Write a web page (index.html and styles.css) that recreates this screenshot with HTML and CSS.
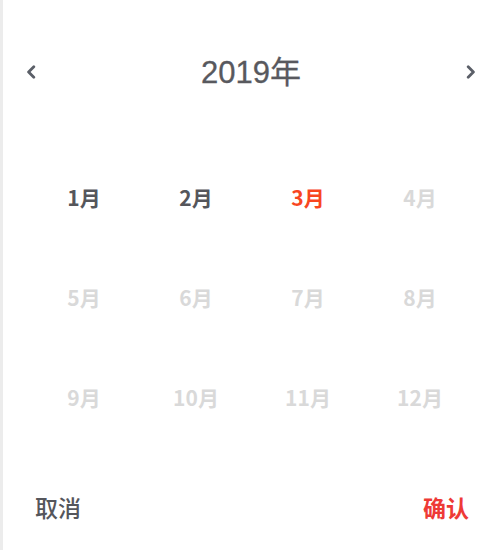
FILE: index.html
```html
<!DOCTYPE html>
<html lang="zh">
<head>
<meta charset="utf-8">
<title>月份选择</title>
<link rel="stylesheet" href="styles.css">
</head>
<body>
<div class="frame">
  <div class="edge"></div>
  <div class="picker">
    <div class="header">
      <button class="nav" aria-label="上一年">
        <svg width="10" height="14" viewBox="0 0 10 14"><path d="M7.8 1.8 L2.6 7 L7.8 12.2" fill="none" stroke="#5b5f68" stroke-width="2.8" stroke-linecap="round" stroke-linejoin="round"/></svg>
      </button>
      <div class="title">2019年</div>
      <button class="nav" aria-label="下一年">
        <svg width="10" height="14" viewBox="0 0 10 14"><path d="M2.2 1.8 L7.4 7 L2.2 12.2" fill="none" stroke="#5b5f68" stroke-width="2.8" stroke-linecap="round" stroke-linejoin="round"/></svg>
      </button>
    </div>
    <div class="months">
      <div class="month">1月</div>
      <div class="month">2月</div>
      <div class="month current">3月</div>
      <div class="month disabled">4月</div>
      <div class="month disabled">5月</div>
      <div class="month disabled">6月</div>
      <div class="month disabled">7月</div>
      <div class="month disabled">8月</div>
      <div class="month disabled">9月</div>
      <div class="month disabled">10月</div>
      <div class="month disabled">11月</div>
      <div class="month disabled">12月</div>
    </div>
    <div class="footer">
      <button class="action cancel">取消</button>
      <button class="action confirm">确认</button>
    </div>
  </div>
</div>
</body>
</html>
```
FILE: styles.css
```css
html, body {
  margin: 0;
  padding: 0;
  background: #ffffff;
}
body {
  font-family: "Liberation Sans", "Noto Sans CJK SC", sans-serif;
  color: #5a5b60;
}
.frame {
  display: flex;
  height: 550px;
}
.edge {
  width: 3px;
  background: #ececec;
  flex: none;
}
.picker {
  flex: 1;
  padding-left: 5px;
  display: flex;
  flex-direction: column;
}
.header {
  height: 58px;
  margin-top: 40px;
  display: flex;
  align-items: center;
  justify-content: space-between;
  padding: 0 20px 0 18px;
}
.nav {
  background: none;
  border: 0;
  padding: 0;
  width: 10px;
  height: 20px;
  display: flex;
  align-items: center;
  justify-content: center;
  margin-top: 6px;
}
.title {
  font-family: "Liberation Sans", "Noto Sans CJK SC", sans-serif;
  font-size: 31px;
  color: #58595e;
  -webkit-text-stroke: 0.3px #58595e;
}
.months {
  display: grid;
  grid-template-columns: repeat(4, 112px);
  grid-auto-rows: 100px;
  padding: 0 20px;
  margin-top: 49px;
}
.month {
  display: flex;
  align-items: center;
  justify-content: center;
  font-family: "Noto Sans CJK SC", sans-serif;
  font-size: 21px;
  font-weight: 700;
  color: #55565b;
}
.month.current {
  color: #f8461f;
}
.month.disabled {
  color: #d9d9d9;
}
.footer {
  display: flex;
  justify-content: space-between;
  padding: 0 27px 0 27px;
  margin-top: 45px;
}
.action {
  background: none;
  border: 0;
  padding: 0;
  font-family: "Noto Sans CJK SC", sans-serif;
  font-size: 23px;
  font-weight: 500;
  line-height: 30px;
}
.cancel {
  color: #55565b;
}
.confirm {
  color: #ee3a36;
  font-weight: 700;
}
```
